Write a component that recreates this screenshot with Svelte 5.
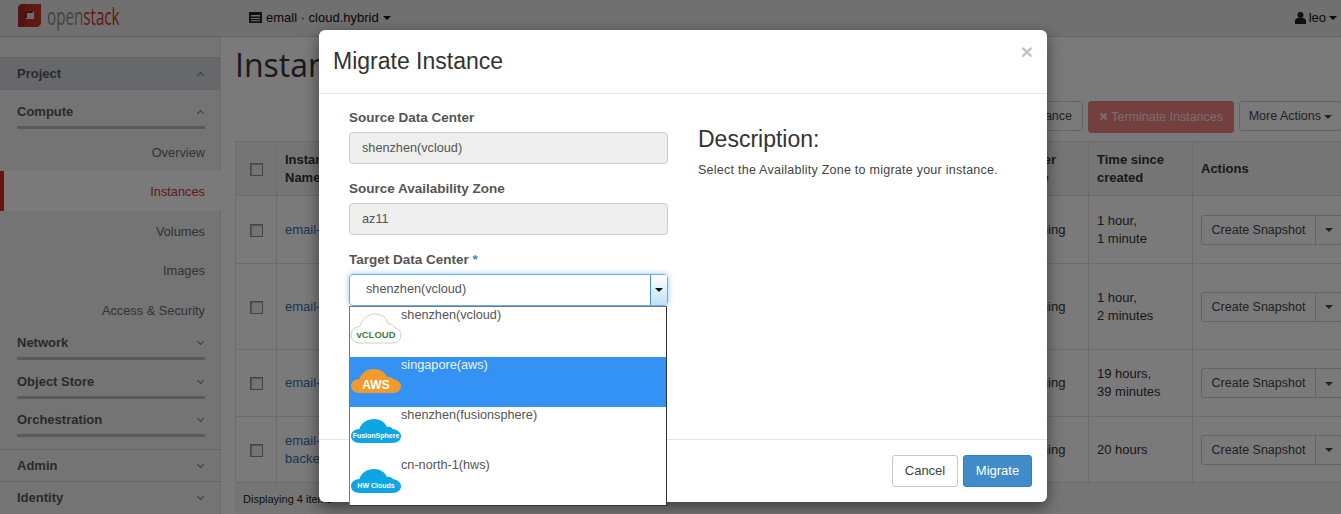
<script lang="ts">
	const compute = ['Overview', 'Instances', 'Volumes', 'Images', 'Access & Security'];
	const groups = ['Network', 'Object Store', 'Orchestration'];
	const rows = [
		{ name: ['email-'], time: ['1 hour,', '1 minute'], height: 68 },
		{ name: ['email-'], time: ['1 hour,', '2 minutes'], height: 86 },
		{ name: ['email-'], time: ['19 hours,', '39 minutes'], height: 67 },
		{ name: ['email-', 'backe'], time: ['20 hours'], height: 66 },
	];
	const lowCloud = 'M10 25 C4 25 1 22 1 18 C1 14 5 11 9.500 11 C11 5 17 1 24 1 C30 1 35 4 37 9 C39 8.500 41 9 43 11 C48 12 51 15 51 18 C51 22 48 25 42 25 Z';
	const tallCloud = 'M10 30 C4 30 1 26 1 22 C1 17 5 14 10 13.500 C12 6 18 1 25 1 C32 1 37 5 38 11 C41 10.500 44 12 45 15 C49 16 51 19 51 22 C51 26 48 30 42 30 Z';
	const options = [
		{ label: 'shenzhen(vcloud)', logo: 'vCLOUD', fill: '#fff', ink: '#3f7f45', stroke: '#c4d4c4', size: 9.500, h: 31, y: 25, path: tallCloud },
		{ label: 'singapore(aws)', logo: 'AWS', fill: '#f39a2b', ink: '#fff', stroke: 'none', size: 12, h: 26, y: 21, path: lowCloud },
		{ label: 'shenzhen(fusionsphere)', logo: 'FusionSphere', fill: '#0ea5e4', ink: '#fff', stroke: 'none', size: 7, h: 26, y: 20, path: lowCloud },
		{ label: 'cn-north-1(hws)', logo: 'HW Clouds', fill: '#0ea5e4', ink: '#fff', stroke: 'none', size: 7, h: 26, y: 20, path: lowCloud },
	];
</script>

<div class="page">
	<header class="navbar">
		<div class="brand">
			<svg width="24" height="24" viewBox="0 0 24 24">
				<path d="M1 4 L4 1 H24 V21 L21 24 H1 Z" fill="#bf3228" />
				<path d="M1 4 L4 1 H8 V24 H1 Z" fill="#a32a22" />
				<path d="M8 8 H17 V16 H8 Z" fill="#d8d8d8" />
				<path d="M8 8 H17 L15 10 H10 V14.500 L8 16 Z" fill="#8e1f1a" />
			</svg>
			<div class="wordmark"><span class="open">open</span><span class="stack">stack</span></div>
		</div>
		<div class="project-pick">
			<svg width="13" height="11" viewBox="0 0 13 11"><path d="M0 0 H13 V11 H0 Z M2 3 V4.500 H11 V3 Z M2 6 V7 H11 V6 Z M2 8.200 V9.200 H11 V8.200 Z" fill="#222" fill-rule="evenodd" /></svg>
			<span>emall · cloud.hybrid</span><i class="caret"></i>
		</div>
		<div class="user">
			<svg width="11" height="12" viewBox="0 0 11 12"><circle cx="5.500" cy="3" r="3" fill="#222" /><path d="M0 12 V9 Q0 6.500 3 6 H8 Q11 6.500 11 9 V12 Z" fill="#222" /></svg>
			<span>leo</span><i class="caret"></i>
		</div>
	</header>

	<div class="layout">
		<aside class="sidebar">
			<div class="side-spacer"></div>
			<div class="panel project"><span>Project</span><i class="chev up"></i></div>
			<div class="subgroup">
				<div class="sub-head"><span>Compute</span><i class="chev up"></i></div>
				<nav class="links">
					{#each compute as link}
						<a class="link" class:active={link === 'Instances'} href="#top">{link}</a>
					{/each}
				</nav>
				{#each groups as group}
					<div class="sub-head closed"><span>{group}</span><i class="chev"></i></div>
				{/each}
			</div>
			<div class="panel admin"><span>Admin</span><i class="chev"></i></div>
			<div class="panel identity"><span>Identity</span><i class="chev"></i></div>
		</aside>

		<main class="content">
			<h1>Instances</h1>
			<div class="toolbar">
				<button class="btn">Launch Instance</button>
				<button class="btn danger">
					<svg width="9" height="9" viewBox="0 0 9 9"><path d="M1.500 1.500 L7.500 7.500 M7.500 1.500 L1.500 7.500" stroke="#f2dede" stroke-width="2.400" /></svg>
					Terminate Instances
				</button>
				<button class="btn more">More Actions <i class="caret"></i></button>
			</div>
			<table>
				<thead>
					<tr>
						<th class="check"><span class="box"></span></th>
						<th class="name">Instance<br />Name</th>
						<th class="state">Power<br />State</th>
						<th class="time">Time since created</th>
						<th class="actions">Actions</th>
					</tr>
				</thead>
				<tbody>
					{#each rows as row}
						<tr style="height: {row.height}px">
							<td class="check"><span class="box"></span></td>
							<td class="name">{#each row.name as part}<a href="#top">{part}</a><br />{/each}</td>
							<td class="state">Running</td>
							<td class="time">{#each row.time as part}{part}<br />{/each}</td>
							<td class="actions">
								<div class="split"><span>Create Snapshot</span><b><i class="caret"></i></b></div>
							</td>
						</tr>
					{/each}
				</tbody>
			</table>
			<div class="table-foot">Displaying 4 items</div>
		</main>
	</div>

	<div class="backdrop"></div>

	<section class="modal">
		<div class="modal-head">
			<h2>Migrate Instance</h2>
			<span class="close">×</span>
		</div>
		<div class="modal-body">
			<form class="fields">
				<label for="dc">Source Data Center</label>
				<div id="dc" class="readonly">shenzhen(vcloud)</div>
				<label for="az">Source Availability Zone</label>
				<div id="az" class="readonly">az11</div>
				<label for="target">Target Data Center <em>*</em></label>
				<div class="select-wrap">
					<div id="target" class="select">
						<span>shenzhen(vcloud)</span>
						<b class="arrow"><i class="caret"></i></b>
					</div>
					<ul class="dropdown">
						{#each options as opt, i}
							<li class:selected={i === 1}>
								<svg class="cloud" class:tall={opt.h > 26} width="52" height={opt.h} viewBox="0 0 52 {opt.h}">
									<path d={opt.path} fill={opt.fill} stroke={opt.stroke} />
									<text x="26" y={opt.y} text-anchor="middle" fill={opt.ink} font-size={opt.size} font-weight="700" font-family="Liberation Sans">{opt.logo}</text>
								</svg>
								<span>{opt.label}</span>
							</li>
						{/each}
					</ul>
				</div>
			</form>
			<div class="desc">
				<h3>Description:</h3>
				<p>Select the Availablity Zone to migrate your instance.</p>
			</div>
		</div>
		<div class="modal-foot">
			<button class="btn cancel">Cancel</button>
			<button class="btn primary">Migrate</button>
		</div>
	</section>
</div>

<style>
	:global(body) {
		margin: 0;
	}

	.page {
		position: relative;
		width: 1341px;
		height: 514px;
		overflow: hidden;
		background: #f4f4f4;
		color: #333;
		font: 13px/18px 'Liberation Sans', Arial, sans-serif;
	}

	.caret {
		display: inline-block;
		border-top: 4px solid currentColor;
		border-left: 4px solid transparent;
		border-right: 4px solid transparent;
		vertical-align: middle;
	}

	.navbar {
		display: flex;
		align-items: center;
		height: 36px;
		border-bottom: 1px solid #c4c4c4;
		background: #e0e0e0;
		color: #111;
	}

	.brand {
		display: flex;
		align-items: center;
		gap: 6px;
		width: 249px;
		padding-left: 17px;
		box-sizing: border-box;
		margin-top: -6px;
	}

	.wordmark {
		width: 73px;
		margin-top: 2px;
		white-space: nowrap;
		font: 23px/28px 'Open Sans', sans-serif;
		transform: scaleX(0.66);
		transform-origin: left;
	}

	.open {
		color: #888;
	}

	.stack {
		color: #c4322a;
	}

	.project-pick {
		display: flex;
		align-items: center;
		gap: 4px;
		margin-top: -1px;
	}

	.user {
		display: flex;
		align-items: center;
		gap: 3px;
		margin-left: auto;
		padding-right: 4px;
		margin-top: -1px;
	}

	.layout {
		display: flex;
		height: 477px;
	}

	.sidebar {
		flex: none;
		width: 220px;
		border-right: 1px solid #d2d2d2;
		background: #e8e8e8;
		color: #555;
	}

	.side-spacer {
		height: 20px;
	}

	.panel {
		display: flex;
		justify-content: space-between;
		align-items: center;
		height: 33px;
		box-sizing: border-box;
		padding: 0 17px;
		border-top: 1px solid #c8c8c8;
		font-weight: 700;
		font-size: 13px;
	}

	.project {
		height: 33px;
		background: #ccd0d6;
		border-bottom: 1px solid #c8c8c8;
	}

	.admin {
		height: 32px;
		margin-top: 12px;
	}

	.chev {
		width: 4px;
		height: 4px;
		border-right: 1.300px solid #777;
		border-bottom: 1.300px solid #777;
		transform: rotate(45deg);
		margin-top: -3px;
	}

	.chev.up {
		transform: rotate(225deg);
		margin-top: 3px;
	}

	.sub-head {
		display: flex;
		justify-content: space-between;
		align-items: center;
		height: 38.500px;
		box-sizing: border-box;
		margin: 0 15px 0 17px;
		padding: 8px 2px 0 0;
		border-bottom: 3px solid #b2b2b2;
		font-weight: 700;
		font-size: 13px;
	}

	.links {
		display: flex;
		flex-direction: column;
		padding-top: 3px;
		margin-bottom: -7.500px;
	}

	.link {
		height: 39.500px;
		line-height: 41px;
		padding-right: 15px;
		box-sizing: border-box;
		text-align: right;
		color: #666;
		text-decoration: none;
		font-size: 12.800px;
	}

	.link.active {
		margin-right: -1px;
		background: #f4f4f4;
		border-left: 4px solid #d0261c;
		color: #c4322a;
		padding-right: 16px;
	}

	.content {
		flex: 1;
		min-width: 0;
		padding-left: 14px;
	}

	h1 {
		margin: 8px 0 0;
		height: 40px;
		font: 400 32px/40px 'Open Sans', sans-serif;
		color: #333;
	}

	.toolbar {
		display: flex;
		justify-content: flex-end;
		gap: 5px;
		margin-top: 16px;
		height: 32px;
	}

	.btn {
		height: 30px;
		padding: 0 10px;
		border: 1px solid #c8c8c8;
		border-radius: 3px;
		background: #fff;
		color: #444;
		font: inherit;
		font-size: 12.500px;
		white-space: nowrap;
	}

	.toolbar .btn {
		background: #f4f4f4;
	}

	.toolbar .danger {
		height: 32px;
		width: 146px;
		padding: 0;
		border-color: #e08080;
		background: #e77f7f;
		color: #f2dede;
	}

	.toolbar .more {
		width: 103px;
		padding: 0 6px;
		margin-right: -1px;
	}

	table {
		width: 1108px;
		margin-top: 8px;
		border-collapse: collapse;
		table-layout: fixed;
	}

	th,
	td {
		padding: 0 8px;
		border: 1px solid #d8d8d8;
		text-align: left;
		box-sizing: border-box;
	}

	th {
		height: 54px;
		background: #eaeaea;
		font-weight: 700;
	}

	.check {
		width: 41px;
		text-align: center;
	}

	.name {
		width: 736px;
	}

	.state {
		width: 76px;
		padding-left: 4px;
	}

	.time {
		width: 104px;
	}

	.actions {
		width: 151px;
	}

	td a {
		color: #2f6fa8;
		text-decoration: none;
	}

	.box {
		display: inline-block;
		width: 11px;
		height: 11px;
		border: 1px solid #888;
		background: #e8e8e8;
		box-shadow: inset 1px 1px 1px #aaa;
		vertical-align: middle;
	}

	.split {
		display: flex;
		width: 142px;
		height: 30px;
		box-sizing: border-box;
		border: 1px solid #c8c8c8;
		border-radius: 3px;
		line-height: 28px;
		font-size: 12.500px;
		color: #444;
	}

	.split span {
		flex: none;
		width: 113px;
		text-align: center;
		border-right: 1px solid #c8c8c8;
		white-space: nowrap;
	}

	.split b {
		flex: 1;
		text-align: center;
	}

	.table-foot {
		width: 1108px;
		height: 30px;
		box-sizing: border-box;
		padding-left: 8px;
		background: #eaeaea;
		font-size: 11px;
		line-height: 32px;
		color: #222;
	}

	.backdrop {
		position: absolute;
		inset: 0;
		background: rgba(0, 0, 0, 0.5);
	}

	.modal {
		position: absolute;
		left: 319px;
		top: 30px;
		width: 728px;
		height: 472px;
		display: flex;
		flex-direction: column;
		border-radius: 6px;
		background: #fff;
		box-shadow: 0 5px 15px rgba(0, 0, 0, 0.5);
	}

	.modal-head {
		display: flex;
		justify-content: space-between;
		height: 63px;
		flex: none;
		padding: 0 14px;
		border-bottom: 1px solid #e5e5e5;
	}

	h2 {
		margin: 0;
		font: 400 23px/62px 'Liberation Sans', sans-serif;
		color: #333;
	}

	.close {
		font: 700 21px/44px 'Liberation Sans', sans-serif;
		color: #c4c4c4;
	}

	.modal-body {
		flex: 1;
		display: flex;
		padding: 14px 30px 0;
		min-height: 0;
	}

	.fields {
		flex: none;
		width: 319px;
	}

	label {
		display: block;
		height: 24px;
		font-weight: 700;
		font-size: 13.500px;
		line-height: 20px;
		color: #555;
	}

	label em {
		color: #3a87c8;
		font-style: normal;
	}

	.readonly {
		height: 32px;
		margin-bottom: 15px;
		padding-left: 12px;
		box-sizing: border-box;
		border: 1px solid #ccc;
		border-radius: 4px;
		background: #eee;
		font-size: 12.700px;
		line-height: 30px;
		color: #555;
	}

	.select-wrap {
		position: relative;
		z-index: 1;
	}

	.select {
		display: flex;
		justify-content: space-between;
		height: 32px;
		padding-left: 16px;
		box-sizing: border-box;
		border: 1px solid #66afe9;
		border-radius: 4px;
		box-shadow: 0 0 6px rgba(102, 175, 233, 0.7);
		font-size: 12.700px;
		line-height: 29px;
		color: #555;
	}

	.arrow {
		width: 16px;
		border-left: 1px solid #4a90c8;
		background: linear-gradient(#fff, #bfe0f6);
		text-align: center;
		color: #111;
	}

	.dropdown {
		position: absolute;
		top: 32px;
		left: 0;
		width: 318px;
		height: 200px;
		margin: 0;
		padding: 0;
		box-sizing: border-box;
		list-style: none;
		border: 1px solid #777;
		border-right-color: #333;
		border-bottom-color: #333;
		background: #fff;
	}

	.dropdown li {
		display: flex;
		height: 50px;
		font-size: 12.700px;
		color: #555;
	}

	.dropdown li.selected {
		margin-top: -0.500px;
		background: #3592f5;
		color: #eaf4ff;
	}

	.cloud {
		flex: none;
		margin: 11px -1px 0 0;
	}

	.cloud.tall {
		margin-top: 6px;
	}

	.dropdown li span {
		line-height: 16px;
	}

	.desc {
		margin-left: 30px;
	}

	h3 {
		margin: 16px 0 0;
		font: 400 23px/30px 'Liberation Sans', sans-serif;
		color: #333;
	}

	.desc p {
		margin: 7px 0 0;
		font-size: 12.500px;
		letter-spacing: 0.25px;
		color: #444;
	}

	.modal-foot {
		display: flex;
		justify-content: flex-end;
		align-items: center;
		gap: 5px;
		height: 62px;
		flex: none;
		padding-right: 15px;
		border-top: 1px solid #e5e5e5;
	}

	.modal-foot .btn {
		height: 32px;
		padding: 0;
		font-size: 13px;
	}

	.cancel {
		width: 66px;
	}

	.modal-foot .primary {
		width: 69px;
		background: #428bca;
		border-color: #357ebd;
		color: #fff;
	}
</style>
